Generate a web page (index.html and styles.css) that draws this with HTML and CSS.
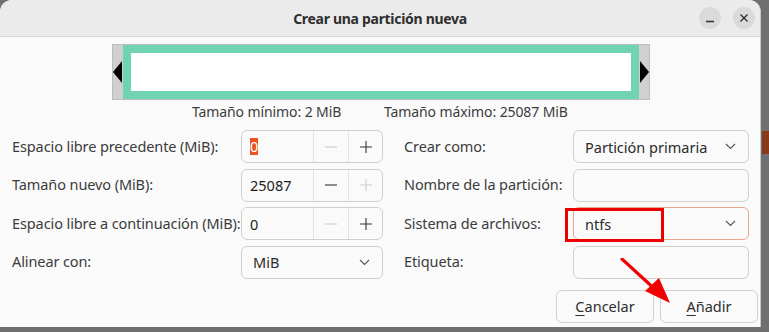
FILE: index.html
```html
<!DOCTYPE html>
<html lang="es">
<head>
<meta charset="utf-8">
<title>Crear una partición nueva</title>
<link rel="stylesheet" href="styles.css">
</head>
<body>
<div class="side-stripe"></div>
<div class="dialog">
  <div class="titlebar">
    <div class="title">Crear una partición nueva</div>
    <div class="wm-buttons">
      <span class="wm-btn"><svg width="10" height="10" viewBox="0 0 10 10"><path d="M1 8.5 H9" stroke="#2e2e2e" stroke-width="1.3"/></svg></span>
      <span class="wm-btn"><svg width="10" height="10" viewBox="0 0 10 10"><path d="M1.5 1.5 L8.5 8.5 M8.5 1.5 L1.5 8.5" stroke="#2e2e2e" stroke-width="1.3"/></svg></span>
    </div>
  </div>
  <div class="content">
    <div class="bar">
      <div class="handle"><svg width="10" height="22" viewBox="0 0 10 22"><path d="M9 0 L0 11 L9 22 Z" fill="#000"/></svg></div>
      <div class="part"><div class="part-inner"></div></div>
      <div class="handle right"><svg width="10" height="22" viewBox="0 0 10 22"><path d="M1 0 L10 11 L1 22 Z" fill="#000"/></svg></div>
    </div>
    <div class="limits">
      <span class="lim-min">Tamaño mínimo: 2 MiB</span>
      <span>Tamaño máximo: 25087 MiB</span>
    </div>
    <div class="form">
      <div class="label">Espacio libre precedente (MiB):</div>
      <div class="spin">
        <div class="entry"><span class="sel">0</span></div>
        <div class="sbtn disabled"><svg width="14" height="14" viewBox="0 0 14 14"><path d="M1 7 H13" stroke="currentColor" stroke-width="1.1"/></svg></div>
        <div class="sbtn"><svg width="14" height="14" viewBox="0 0 14 14"><path d="M1 7 H13 M7 1 V13" stroke="currentColor" stroke-width="1.1"/></svg></div>
      </div>
      <div class="label r">Crear como:</div>
      <div class="combo"><span>Partición primaria</span><svg width="11" height="7" viewBox="0 0 11 7"><path d="M1 1 L5.5 5.5 L10 1" fill="none" stroke="#555" stroke-width="1.1"/></svg></div>

      <div class="label">Tamaño nuevo (MiB):</div>
      <div class="spin">
        <div class="entry">25087</div>
        <div class="sbtn"><svg width="14" height="14" viewBox="0 0 14 14"><path d="M1 7 H13" stroke="currentColor" stroke-width="1.1"/></svg></div>
        <div class="sbtn disabled"><svg width="14" height="14" viewBox="0 0 14 14"><path d="M1 7 H13 M7 1 V13" stroke="currentColor" stroke-width="1.1"/></svg></div>
      </div>
      <div class="label r">Nombre de la partición:</div>
      <div class="textbox"></div>

      <div class="label">Espacio libre a continuación (MiB):</div>
      <div class="spin">
        <div class="entry">0</div>
        <div class="sbtn disabled"><svg width="14" height="14" viewBox="0 0 14 14"><path d="M1 7 H13" stroke="currentColor" stroke-width="1.1"/></svg></div>
        <div class="sbtn"><svg width="14" height="14" viewBox="0 0 14 14"><path d="M1 7 H13 M7 1 V13" stroke="currentColor" stroke-width="1.1"/></svg></div>
      </div>
      <div class="label r">Sistema de archivos:</div>
      <div class="combo focus"><span>ntfs</span><svg width="11" height="7" viewBox="0 0 11 7"><path d="M1 1 L5.5 5.5 L10 1" fill="none" stroke="#555" stroke-width="1.1"/></svg></div>

      <div class="label">Alinear con:</div>
      <div class="combo"><span>MiB</span><svg width="11" height="7" viewBox="0 0 11 7"><path d="M1 1 L5.5 5.5 L10 1" fill="none" stroke="#555" stroke-width="1.1"/></svg></div>
      <div class="label r">Etiqueta:</div>
      <div class="textbox"></div>
    </div>
    <div class="buttons">
      <button class="btn"><u>C</u>ancelar</button>
      <button class="btn"><u>A</u>ñadir</button>
    </div>
  </div>
  <div class="highlight-box"></div>
  <svg class="red-arrow" width="70" height="60" viewBox="0 0 70 60">
    <path d="M2 1 L38 34" stroke="#f00000" stroke-width="3.2" stroke-linecap="round"/>
    <path d="M50 45 L25 33 L39 20 Z" fill="#f00000"/>
  </svg>
</div>
</body>
</html>
```
FILE: styles.css
```css
* { box-sizing: border-box; }
html, body { margin: 0; padding: 0; }
body {
  width: 769px;
  height: 332px;
  background: #6f6f6f;
  font-family: "Noto Sans", "Open Sans", sans-serif;
  font-size: 14px;
  color: #3c3c3c;
  position: relative;
  overflow: hidden;
}
.side-stripe {
  position: absolute;
  left: 762px;
  top: 131px;
  width: 7px;
  height: 23px;
  background: #8a3a1c;
}
.dialog {
  position: relative;
  width: 761px;
  height: 327px;
  background: #fafafa;
  border-radius: 12px 12px 0 0;
  overflow: hidden;
  border-right: 1px solid #c8c8c8;
}
.titlebar {
  height: 37px;
  background: #ebebeb;
  border-bottom: 1px solid #d6d6d6;
  display: flex;
  align-items: center;
  justify-content: center;
  position: relative;
}
.title {
  font-weight: bold;
  font-size: 14px;
  color: #2e2e2e;
  letter-spacing: -0.3px;
}
.wm-buttons {
  position: absolute;
  right: 5px;
  top: 7px;
  display: flex;
  gap: 12px;
}
.wm-btn {
  width: 22px;
  height: 22px;
  border-radius: 50%;
  background: #dadada;
  display: flex;
  align-items: center;
  justify-content: center;
}
.content {
  padding: 7px 12px 0 12px;
}
.bar {
  margin-left: 100px;
  width: 538px;
  height: 56px;
  border: 1px solid #bdbdbd;
  background: #d0d0d0;
  display: flex;
  align-items: center;
}
.handle {
  width: 10px;
  display: flex;
  align-items: center;
  justify-content: flex-start;
}
.handle.right { justify-content: flex-end; }
.part {
  flex: 1;
  height: 54px;
  background: #70d4b2;
  padding: 8px;
}
.part-inner {
  width: 100%;
  height: 100%;
  background: #ffffff;
}
.limits {
  display: flex;
  margin-left: 180px;
  height: 22px;
  align-items: center;
  font-size: 14px;
  letter-spacing: -0.1px;
}
.lim-min { width: 192px; }
.form {
  margin-top: 8px;
  display: grid;
  grid-template-columns: 229px 142px 190px 176px;
  grid-auto-rows: 33px;
  row-gap: 5.67px;
  align-items: center;
}
.label {
  white-space: nowrap;
  font-size: 14.5px;
  letter-spacing: -0.1px;
  padding-bottom: 2px;
}
.label.r { padding-left: 21px; }
.spin, .combo, .textbox {
  height: 33px;
  border: 1px solid #cfcfcf;
  border-radius: 6px;
  background: #fafafa;
}
.spin {
  display: grid;
  grid-template-columns: 71px 35px 34px;
}
.entry {
  padding-left: 8px;
  display: flex;
  align-items: center;
  color: #1c1c1c;
  font-size: 14.5px;
}
.sel {
  background: #e95420;
  color: #ffffff;
  line-height: 17px;
}
.sbtn {
  border-left: 1px solid #e3e3e3;
  display: flex;
  align-items: center;
  justify-content: center;
  color: #333;
}
.sbtn.disabled { color: #cdcdcd; }
.combo {
  display: flex;
  align-items: center;
  justify-content: space-between;
  padding: 0 12px 0 11px;
  color: #2a2a2a;
  font-size: 14.5px;
}
.combo.focus { border-color: #eda48d; }
.buttons {
  margin-top: 11px;
  display: flex;
  justify-content: flex-end;
  gap: 6px;
  margin-right: -10px;
}
.btn {
  width: 98px;
  height: 33px;
  border: 1px solid #d0d0d0;
  border-radius: 6px;
  background: #fafafa;
  font-family: inherit;
  font-size: 14.5px;
  color: #2e2e2e;
}
.btn u { text-underline-offset: 3px; }
.highlight-box {
  position: absolute;
  left: 565px;
  top: 208px;
  width: 99px;
  height: 34px;
  border: 3px solid #ee0000;
}
.red-arrow {
  position: absolute;
  left: 620px;
  top: 258px;
}
```
